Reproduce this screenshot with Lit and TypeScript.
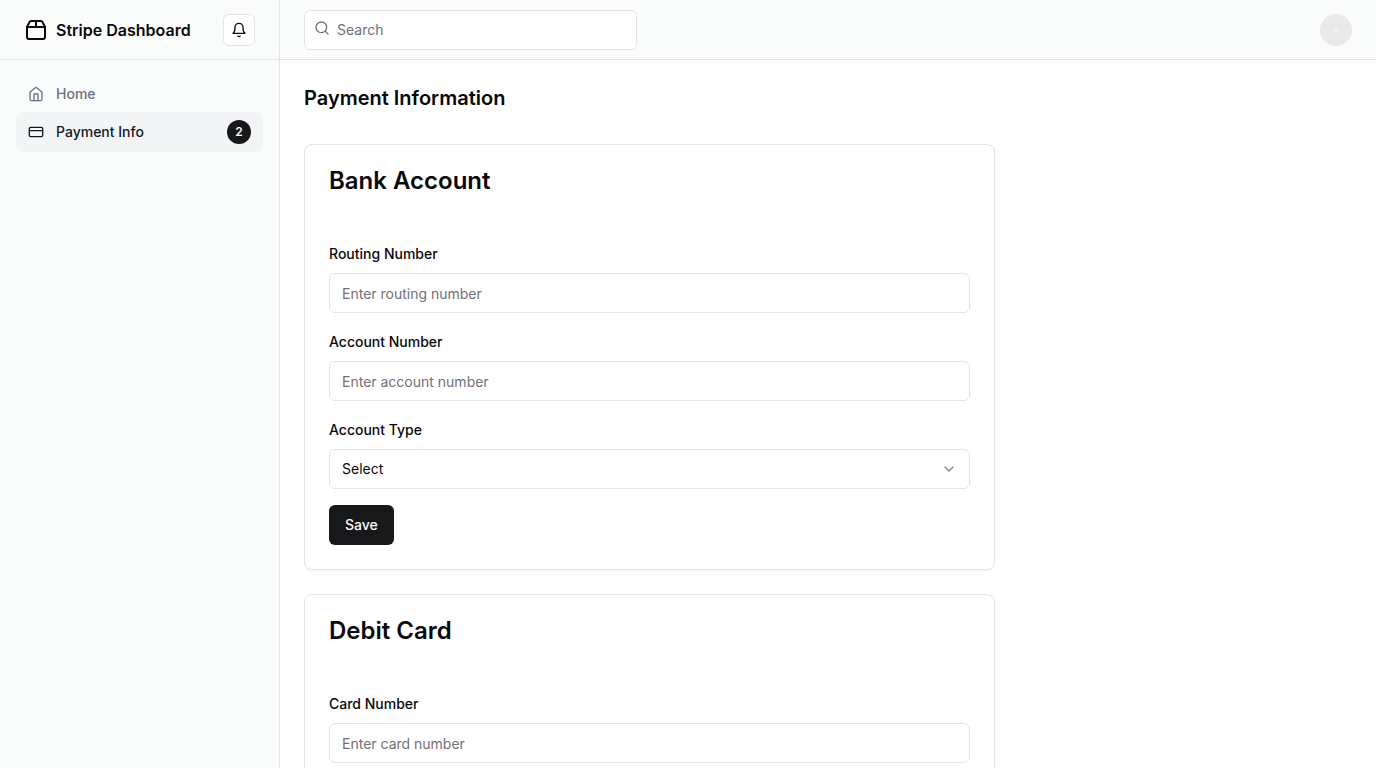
import { LitElement, html, css, svg } from "lit";
import { customElement } from "lit/decorators.js";

const icon = (cls: string, shapes: unknown) => html`
  <svg class="icon ${cls}" viewBox="0 0 24 24" fill="none" stroke="currentColor" stroke-width="2"
    stroke-linecap="round" stroke-linejoin="round" aria-hidden="true">${shapes}</svg>`;

const packageShapes = svg`<path d="M3 9h18v10a2 2 0 0 1-2 2H5a2 2 0 0 1-2-2V9Z"/><path d="m3 9 2.45-4.9A2 2 0 0 1 7.24 3h9.52a2 2 0 0 1 1.8 1.1L21 9"/><path d="M12 3v6"/>`;
const bellShapes = svg`<path d="M6 8a6 6 0 0 1 12 0c0 7 3 9 3 9H3s3-2 3-9"/><path d="M10.3 21a1.94 1.94 0 0 0 3.4 0"/>`;
const homeShapes = svg`<path d="m3 9 9-7 9 7v11a2 2 0 0 1-2 2H5a2 2 0 0 1-2-2z"/><path d="M9 22V12h6v10"/>`;
const cardShapes = svg`<rect width="20" height="14" x="2" y="5" rx="2"/><path d="M2 10h20"/>`;
const searchShapes = svg`<circle cx="11" cy="11" r="8"/><path d="m21 21-4.3-4.3"/>`;
const chevronShapes = svg`<path d="m6 9 6 6 6-6"/>`;

@customElement("app-root")
export class AppRoot extends LitElement {
  static styles = css`
    :host {
      display: block;
      font-family: Inter, "Liberation Sans", sans-serif;
      font-size: 16px;
      line-height: 24px;
      color: #09090b;
      background: #fff;
    }
    *, *::before, *::after { box-sizing: border-box; }
    h1, h2 { margin: 0; font-weight: 600; }
    button, input, select { font: inherit; color: inherit; margin: 0; }
    .icon { display: block; flex: none; width: 16px; height: 16px; }
    .layout {
      display: grid;
      grid-template-columns: 280px minmax(0, 1fr);
      height: 100vh;
    }
    .sidebar { background: #fafcfb; border-right: 1px solid #e4e4e7; }
    .brand-bar, .topbar {
      display: flex;
      align-items: center;
      height: 60px;
      padding: 0 24px;
      border-bottom: 1px solid #e4e4e7;
    }
    .brand-bar { justify-content: space-between; }
    .brand {
      display: flex;
      align-items: center;
      gap: 8px;
      color: inherit;
      font-weight: 600;
      text-decoration: none;
    }
    .logo { width: 24px; height: 24px; }
    .bell {
      display: grid;
      place-items: center;
      width: 32px;
      height: 32px;
      padding: 0;
      background: #fff;
      border: 1px solid #e4e4e7;
      border-radius: 6px;
    }
    .nav { display: grid; padding: 16px; }
    .nav-link {
      display: flex;
      align-items: center;
      gap: 12px;
      padding: 8px 12px;
      border-radius: 8px;
      font-size: 14px;
      line-height: 20px;
      font-weight: 500;
      color: #6b7280;
      text-decoration: none;
    }
    .active { background: #f3f4f6; color: #111827; }
    .badge {
      display: grid;
      place-items: center;
      width: 24px;
      height: 24px;
      margin-left: auto;
      border-radius: 50%;
      background: #18181b;
      color: #fafafa;
      font-size: 12px;
      line-height: 16px;
      font-weight: 600;
    }
    .content { display: flex; flex-direction: column; min-height: 0; }
    .topbar { flex: none; gap: 16px; justify-content: space-between; background: #fafcfb; }
    .search-area { flex: 1; }
    .search { position: relative; width: calc(100% / 3); }
    .search-icon { position: absolute; left: 10px; top: 10px; color: #6b7280; }
    .field-input {
      display: block;
      width: 100%;
      height: 40px;
      padding: 8px 12px;
      border: 1px solid #e4e4e7;
      border-radius: 6px;
      background: #fff;
      font-size: 14px;
      line-height: 20px;
      outline: none;
    }
    .field-input::placeholder { color: #71717a; opacity: 1; }
    .search-input { padding-left: 32px; }
    .avatar {
      width: 32px;
      height: 32px;
      padding: 0;
      border: 0;
      border-radius: 50%;
      background: radial-gradient(circle, #efefef 0 2px, #e9e9e9 3px);
    }
    .main {
      flex: 1;
      min-height: 0;
      overflow-y: auto;
      scrollbar-width: none;
      padding: 24px;
    }
    .page-title { font-size: 20px; line-height: 28px; margin-bottom: 32px; }
    .columns {
      display: grid;
      grid-template-columns: minmax(0, 2fr) minmax(0, 1fr);
      column-gap: 12px;
    }
    .cards { display: grid; gap: 24px; }
    .card {
      padding: 24px;
      border: 1px solid #e4e4e7;
      border-radius: 8px;
      background: #fff;
      box-shadow: 0 1px 2px rgba(0, 0, 0, 0.05);
    }
    .card-title { font-size: 24px; line-height: 24px; margin-bottom: 48px; }
    .form { display: grid; gap: 16px; }
    .field { display: grid; gap: 8px; }
    .label { font-size: 14px; line-height: 14px; font-weight: 500; }
    .select-wrap { position: relative; }
    .select { appearance: none; }
    .chevron { position: absolute; right: 13px; top: 12px; opacity: 0.5; pointer-events: none; }
    .save {
      justify-self: start;
      height: 40px;
      padding: 8px 16px;
      border: 0;
      border-radius: 6px;
      background: #18181b;
      color: #fafafa;
      font-size: 14px;
      line-height: 20px;
      font-weight: 500;
    }
  `;

  private textField(id: string, label: string, placeholder: string) {
    return html`
      <div class="field">
        <div><label class="label" for=${id}>${label}</label></div>
        <input class="field-input" id=${id} type="text" placeholder=${placeholder} />
      </div>`;
  }

  render() {
    return html`
      <div class="layout">
        <aside class="sidebar">
          <div class="brand-bar">
            <a class="brand" href="#">${icon("logo", packageShapes)}<span>Stripe Dashboard</span></a>
            <button class="bell" type="button" aria-label="Notifications">${icon("", bellShapes)}</button>
          </div>
          <nav class="nav">
            <a class="nav-link" href="#">${icon("", homeShapes)}Home</a>
            <a class="nav-link active" href="#" aria-current="page">
              ${icon("", cardShapes)}Payment Info<span class="badge">2</span>
            </a>
          </nav>
        </aside>
        <div class="content">
          <header class="topbar">
            <form class="search-area" role="search">
              <div class="search">
                ${icon("search-icon", searchShapes)}
                <input class="field-input search-input" type="search" placeholder="Search" aria-label="Search" />
              </div>
            </form>
            <button class="avatar" type="button" aria-label="Account"></button>
          </header>
          <main class="main">
            <h1 class="page-title">Payment Information</h1>
            <div class="columns">
              <div class="cards">
                <section class="card">
                  <h2 class="card-title">Bank Account</h2>
                  <form class="form">
                    ${this.textField("routing", "Routing Number", "Enter routing number")}
                    ${this.textField("account", "Account Number", "Enter account number")}
                    <div class="field">
                      <div><label class="label" for="type">Account Type</label></div>
                      <div class="select-wrap">
                        <select class="field-input select" id="type"><option>Select</option></select>
                        ${icon("chevron", chevronShapes)}
                      </div>
                    </div>
                    <button class="save" type="button">Save</button>
                  </form>
                </section>
                <section class="card">
                  <h2 class="card-title">Debit Card</h2>
                  <form class="form">
                    ${this.textField("card", "Card Number", "Enter card number")}
                  </form>
                </section>
              </div>
            </div>
          </main>
        </div>
      </div>`;
  }
}
